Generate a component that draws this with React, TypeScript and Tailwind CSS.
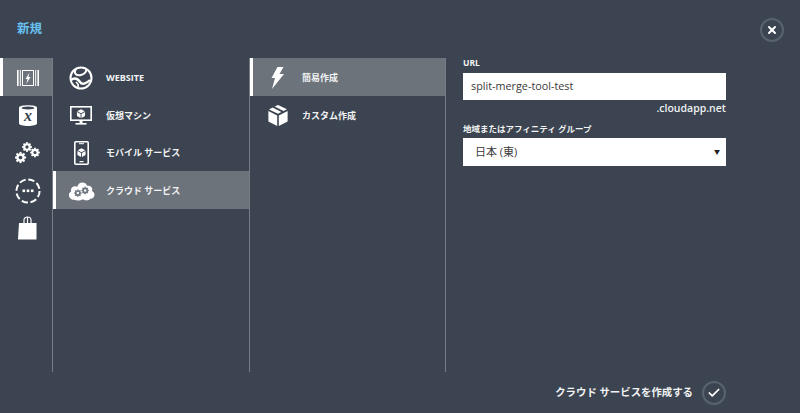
import { Check, X } from "lucide-react";
import type { ReactNode } from "react";

const font = { fontFamily: '"Open Sans", "Noto Sans CJK JP", sans-serif' };

function Cube({ x, y, s }: { x: number; y: number; s: number }) {
  return (
    <g transform={`translate(${x} ${y}) scale(${s})`} fill="currentColor">
      <path d="M0 -10 L9 -5.2 L0 -0.6 L-9 -5.2 Z" />
      <path d="M-9.6 -3.4 L-1 1 L-1 11 L-9.6 6.2 Z" />
      <path d="M9.6 -3.4 L1 1 L1 11 L9.6 6.2 Z" />
    </g>
  );
}

function Gear({ x, y, r }: { x: number; y: number; r: number }) {
  return (
    <g transform={`translate(${x} ${y})`}>
      <circle r={r * 0.62} fill="none" stroke="currentColor" strokeWidth={r * 0.5} />
      {[0, 45, 90, 135, 180, 225, 270, 315].map((a) => (
        <rect key={a} x={-r * 0.2} y={-r * 1.12} width={r * 0.4} height={r * 0.4} fill="currentColor" transform={`rotate(${a})`} />
      ))}
    </g>
  );
}

const rail: ReactNode[] = [
  <svg key="a" width="22" height="16" viewBox="0 0 22 16" fill="currentColor">
    <rect x="0" y="0" width="1.6" height="16" />
    <rect x="2.8" y="0" width="1" height="16" />
    <rect x="18.2" y="0" width="1" height="16" />
    <rect x="20.4" y="0" width="1.6" height="16" />
    <path fillRule="evenodd" d="M5 0 H17 V16 H5 Z M6 1 V15 H16 V1 Z" />
    <path d="M12.5 2.5 L8.5 9 L10.6 9 L9.2 14 L13.6 7 L11.4 7 Z" />
  </svg>,
  <svg key="b" width="18" height="23" viewBox="0 0 18 23">
    <path d="M0 3.5 C0 0.5 18 0.5 18 3.5 L18 19.5 C18 22.8 0 22.8 0 19.5 Z" fill="currentColor" />
    <ellipse cx="9" cy="4" rx="6.5" ry="1.5" fill="#3b4450" />
    <text x="9" y="17" textAnchor="middle" fontSize="16" fontWeight="700" fontStyle="italic" fontFamily="Liberation Serif, serif" fill="#3b4450">x</text>
  </svg>,
  <svg key="c" width="25" height="22" viewBox="0 0 25 22" className="text-white">
    <Gear x={12} y={5} r={4.4} />
    <Gear x={20} y={10.5} r={4.3} />
    <Gear x={5.5} y={15.5} r={5} />
  </svg>,
  <svg key="d" width="26" height="26" viewBox="0 0 26 26" fill="none">
    <circle cx="13" cy="13" r="11.6" stroke="currentColor" strokeWidth="2" strokeDasharray="6.4 2.7" />
    <rect x="7.5" y="11.5" width="2.6" height="2.6" fill="currentColor" />
    <rect x="11.7" y="11.5" width="2.6" height="2.6" fill="currentColor" />
    <rect x="15.9" y="11.5" width="2.6" height="2.6" fill="currentColor" />
  </svg>,
  <svg key="e" width="19" height="24" viewBox="0 0 19 24" fill="none">
    <path d="M1 7 L18.5 7 L18.5 23.5 L0 23.5 Z" fill="currentColor" />
    <path d="M6 8 V4 C6 0 13 0 13 4 V8 M9.5 1.5 V7" stroke="currentColor" strokeWidth="1.2" />
  </svg>,
];

const services: { label: string; icon: ReactNode; active?: boolean }[] = [
  {
    label: "WEBSITE",
    icon: (
      <svg width="24" height="24" viewBox="0 0 24 24" fill="none" stroke="currentColor">
        <circle cx="12" cy="12" r="10.5" strokeWidth="2" />
        <path d="M7 3 C4 8 8 10 12 9 C16 8 18 5 17 3" strokeWidth="2" />
        <path d="M2 14 C6 11 9 13 11 16 C13 19 17 18 21 14" strokeWidth="2.4" />
        <path d="M9 21 C10 18 8 17 7 16" strokeWidth="1.6" />
      </svg>
    ),
  },
  {
    label: "仮想マシン",
    icon: (
      <svg width="22" height="19" viewBox="0 0 22 19" className="text-white">
        <rect x="0.8" y="0.8" width="20.4" height="13.4" fill="none" stroke="currentColor" strokeWidth="1.6" />
        <Cube x={11} y={7.5} s={0.42} />
        <rect x="9.5" y="15" width="3" height="2" fill="currentColor" />
        <rect x="5.5" y="17" width="11" height="1.6" fill="currentColor" />
      </svg>
    ),
  },
  {
    label: "モバイル サービス",
    icon: (
      <svg width="15" height="24" viewBox="0 0 15 24" className="text-white">
        <rect x="0.8" y="0.8" width="13.4" height="22.4" rx="1" fill="none" stroke="currentColor" strokeWidth="1.6" />
        <rect x="5" y="2.2" width="5" height="1" fill="currentColor" />
        <Cube x={7.5} y={11.5} s={0.42} />
        <rect x="5.5" y="20" width="4" height="1.2" fill="currentColor" />
      </svg>
    ),
  },
  {
    label: "クラウド サービス",
    active: true,
    icon: (
      <svg width="27" height="23" viewBox="0 0 26 20">
        <path d="M6 19 C1 19 -1 13 3 11 C2 7 6 5 9 6.5 C10 1 17 1 18.5 5.5 C22 4.5 24.5 8 23 10.5 C27 12 26 18 21.5 18 C20 20 16 20 14.5 18.5 C12 20 8 20 6 19 Z" fill="currentColor" />
        <g className="text-[#6c737b]">
          <Gear x={9.5} y={12.5} r={3.2} />
          <Gear x={16.5} y={10} r={3.2} />
        </g>
      </svg>
    ),
  },
];

const types: { label: string; icon: ReactNode; active?: boolean }[] = [
  {
    label: "簡易作成",
    active: true,
    icon: (
      <svg width="13" height="22" viewBox="0 0 13 22" fill="currentColor">
        <path d="M6.5 0 L12.5 0 L8.5 7 L13 7 L1 22 L4 11 L0.5 11 Z" />
      </svg>
    ),
  },
  {
    label: "カスタム作成",
    icon: (
      <svg width="20" height="21" viewBox="0 0 20 21" fill="currentColor">
        <path d="M10 0 L19 4.2 L15.5 6 L6.6 1.6 Z" />
        <path d="M4.6 2.6 L13.4 7 L10 8.8 L1 4.4 Z" />
        <path d="M0.4 6 L9.2 10.4 L9.2 21 L0.4 16.4 Z" />
        <path d="M19.6 6 L10.8 10.4 L10.8 21 L19.6 16.4 Z" />
      </svg>
    ),
  },
];

function MenuRow({ label, icon, active, iconW }: { label: string; icon: ReactNode; active?: boolean; iconW: string }) {
  return (
    <div className={`flex h-[37.67px] items-center pt-[2px] ${active ? "border-l-[3px] border-white bg-[#6c737b]" : "border-l-[3px] border-transparent"}`}>
      <div className={`flex shrink-0 items-center justify-center ${iconW}`}>{icon}</div>
      <span className="whitespace-nowrap text-[9px] font-bold text-[#f2f3f4]">{label}</span>
    </div>
  );
}

export default function App() {
  return (
    <div className="flex h-[413px] w-[800px] flex-col overflow-hidden bg-[#3b4450] text-white" style={font}>
      <header className="flex h-[58px] shrink-0 items-start justify-between pl-[17px] pr-4 pt-[18px]">
        <h1 className="-mt-px text-[12.5px] font-bold leading-6 text-[#68c1f2]">新規</h1>
        <button className="flex h-6 w-6 items-center justify-center rounded-full border-2 border-[#596270]">
          <X size={12} strokeWidth={4} />
        </button>
      </header>

      <main className="flex h-[314px] shrink-0">
        <nav className="w-[53px] shrink-0 border-r border-[#777d85]">
          {rail.map((icon, i) => (
            <div
              key={i}
              className={`flex h-[37.67px] items-center justify-center pt-[2px] ${i === 0 ? "border-l-[3px] border-white bg-[#6c737b]" : "border-l-[3px] border-transparent"}`}
            >
              {icon}
            </div>
          ))}
        </nav>

        <section className="w-[197px] shrink-0 border-r border-[#777d85]">
          {services.map((s) => (
            <MenuRow key={s.label} {...s} iconW="w-[50px]" />
          ))}
        </section>

        <section className="w-[196px] shrink-0 border-r border-[#777d85]">
          {types.map((t) => (
            <MenuRow key={t.label} {...t} iconW="w-[49px]" />
          ))}
        </section>

        <form className="ml-[17px] w-[263px] shrink-0">
          <label className="block pb-[5px] text-[8.5px] font-bold leading-[10px] text-[#f2f3f4]">URL</label>
          <div className="flex h-[27px] items-center bg-white pl-2 text-[10.8px] text-[#3a3a3a]">split-merge-tool-test</div>
          <div className="mt-[1px] text-right text-[10.5px] font-semibold leading-[15px] text-[#eef0f1]">.cloudapp.net</div>
          <label className="mt-[6px] block text-[8.5px] font-bold leading-[14px] text-[#f2f3f4]">地域またはアフィニティ グループ</label>
          <div className="mt-[2px] flex h-[28px] items-center justify-between bg-white pl-3 pr-[6px] text-[11px] text-[#3a3a3a]">
            <span>日本 (東)</span>
            <span className="text-[6px] text-[#222]">▼</span>
          </div>
        </form>
      </main>

      <footer className="flex flex-1 items-center justify-end gap-[9px] pr-[74px]">
        <span className="text-[10.4px] font-bold text-[#f2f3f4]">クラウド サービスを作成する</span>
        <button className="flex h-6 w-6 items-center justify-center rounded-full border-2 border-[#596270]">
          <Check size={14} strokeWidth={3} />
        </button>
      </footer>
    </div>
  );
}
